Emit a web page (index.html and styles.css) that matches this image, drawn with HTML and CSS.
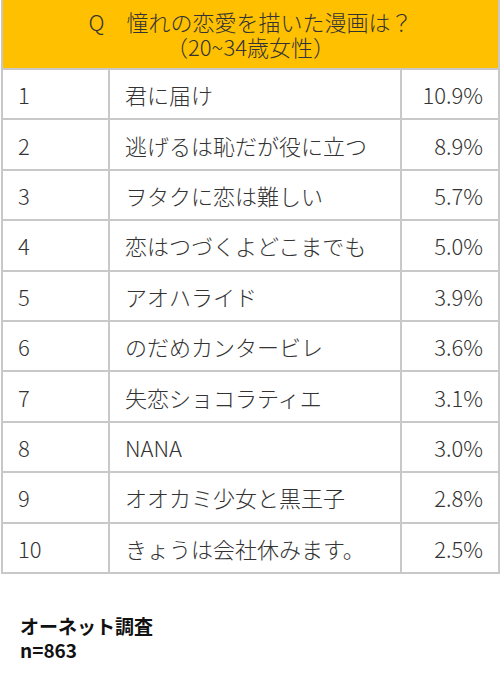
FILE: index.html
```html
<!DOCTYPE html>
<html lang="ja">
<head>
  <meta charset="UTF-8">
  <meta name="viewport" content="width=device-width, initial-scale=1.0">
  <title>憧れの恋愛を描いた漫画は？</title>
  <link rel="stylesheet" href="styles.css">
</head>
<body>
  <table class="ranking">
    <colgroup>
      <col class="col-rank">
      <col class="col-title">
      <col class="col-pct">
    </colgroup>
    <thead>
      <tr>
        <th colspan="3">Q　憧れの恋愛を描いた漫画は？<br>（20~34歳女性）</th>
      </tr>
    </thead>
    <tbody>
      <tr><td>1</td><td>君に届け</td><td class="pct">10.9%</td></tr>
      <tr><td>2</td><td>逃げるは恥だが役に立つ</td><td class="pct">8.9%</td></tr>
      <tr><td>3</td><td>ヲタクに恋は難しい</td><td class="pct">5.7%</td></tr>
      <tr><td>4</td><td>恋はつづくよどこまでも</td><td class="pct">5.0%</td></tr>
      <tr><td>5</td><td>アオハライド</td><td class="pct">3.9%</td></tr>
      <tr><td>6</td><td>のだめカンタービレ</td><td class="pct">3.6%</td></tr>
      <tr><td>7</td><td>失恋ショコラティエ</td><td class="pct">3.1%</td></tr>
      <tr><td>8</td><td>NANA</td><td class="pct">3.0%</td></tr>
      <tr><td>9</td><td>オオカミ少女と黒王子</td><td class="pct">2.8%</td></tr>
      <tr><td>10</td><td>きょうは会社休みます。</td><td class="pct">2.5%</td></tr>
    </tbody>
  </table>

  <!-- 出典 -->
  <div class="source">
    <div>オーネット調査</div>
    <div>n=863</div>
  </div>
</body>
</html>
```

FILE: styles.css
```css
body {
  margin: 0;
  background: #fff;
  color: #333;
  font-family: 'Noto Sans CJK JP', 'Noto Sans', sans-serif;
}
.ranking {
  border-collapse: collapse;
  margin-left: 1px;
  width: 497px;
  table-layout: fixed;
  font-size: 22px;
  font-weight: 300;
}
.col-rank { width: 107px; }
.col-title { width: 292px; }
.col-pct { width: 98px; }
.ranking th {
  background: #ffc000;
  color: #333;
  font-weight: 300;
  line-height: 25px;
  height: 68px;
  padding: 0;
  border: 2px solid #c8c8c8;
  border-top: none;
}
.ranking td {
  height: 50.4px;
  padding: 0 15px;
  border: 2px solid #c8c8c8;
  box-sizing: border-box;
  line-height: 1;
  white-space: nowrap;
}
.ranking .pct {
  text-align: right;
}
.source {
  margin: 40px 0 0 20px;
  font-size: 19px;
  font-weight: bold;
  line-height: 24px;
  color: #111;
}
```
